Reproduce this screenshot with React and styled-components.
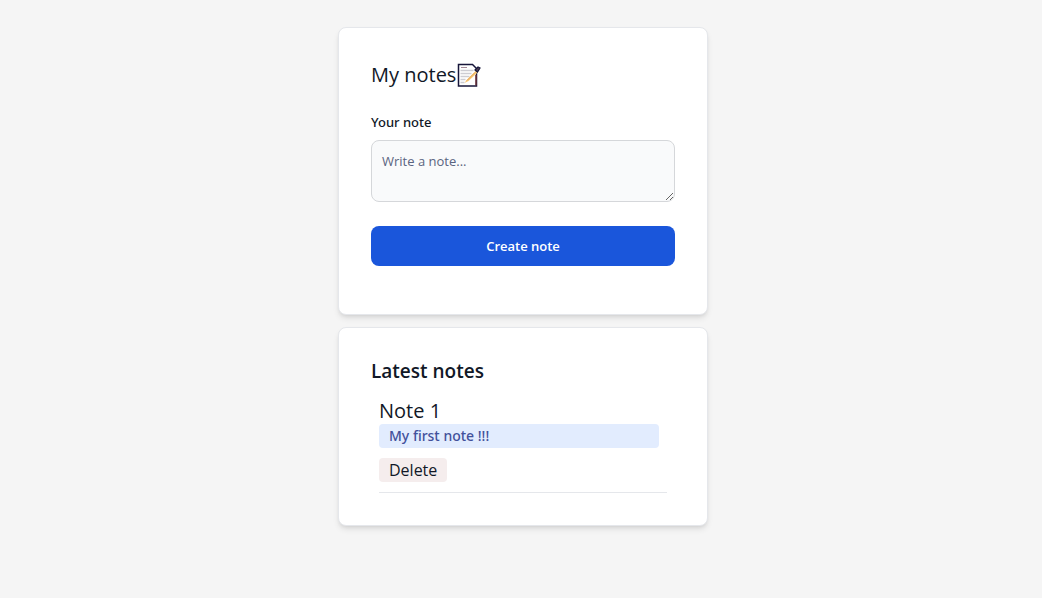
import React from "react";
import styled, { createGlobalStyle } from "styled-components";

const GlobalStyle = createGlobalStyle`
  *, *::before, *::after { box-sizing: border-box; }
  body {
    margin: 0;
    background: #f5f5f5;
    color: #111827;
    font-family: "Segoe UI", "Open Sans", "Noto Sans", sans-serif;
  }
`;

const Page = styled.main`
  display: flex;
  flex-direction: column;
  align-items: center;
  gap: 12px;
  padding: 27px 0 27px 4px;
`;

const Card = styled.section`
  width: 100%;
  max-width: 370px;
  padding: 32px;
  background: #fff;
  border: 1px solid #e5e7eb;
  border-radius: 8px;
  box-shadow: 0 4px 6px -1px rgba(0, 0, 0, 0.1), 0 2px 4px -2px rgba(0, 0, 0, 0.1);
`;

const Title = styled.h1`
  display: flex;
  align-items: center;
  margin: 0 0 22px;
  font-size: 20px;
  line-height: 30px;
  font-weight: 400;
`;

const MemoSvg = styled.svg`
  flex: none;
  width: 26px;
  height: 26px;
`;

const Form = styled.form`
  display: flex;
  flex-direction: column;
  margin: 0 0 16px;
`;

const Label = styled.label`
  margin-bottom: 8px;
  font-family: "Segoe UI", "Noto Sans", sans-serif;
  font-size: 13px;
  line-height: 20px;
  font-weight: 500;
`;

const NoteInput = styled.textarea`
  display: block;
  width: 100%;
  height: 62px;
  margin-bottom: 24px;
  padding: 10px;
  resize: vertical;
  font: inherit;
  font-size: 13px;
  line-height: 20px;
  color: #111827;
  background: #f9fafb;
  border: 1px solid #d5d7da;
  border-radius: 8px;

  &::placeholder { color: #5a6480; opacity: 1; }
`;

const SubmitButton = styled.button`
  padding: 10px 20px;
  font: inherit;
  font-size: 13px;
  line-height: 20px;
  font-weight: 600;
  color: #fff;
  background: #1a56db;
  border: 0;
  border-radius: 8px;
  cursor: pointer;
`;

const ListTitle = styled.h2`
  margin: 0 0 16px;
  font-size: 19px;
  line-height: 22px;
  font-weight: 600;
`;

const NoteList = styled.ul`
  margin: 0;
  padding: 0 8px;
  list-style: none;
`;

const NoteItem = styled.li`
  display: flex;
  flex-direction: column;
  align-items: flex-start;
  padding-bottom: 10px;
  border-bottom: 1px solid #e5e7eb;
`;

const NoteTitle = styled.h3`
  margin: 0;
  font-size: 20px;
  line-height: 26px;
  font-weight: 400;
`;

const NoteText = styled.p`
  align-self: stretch;
  margin: 0 8px 10px 0;
  padding: 2px 10px;
  font-family: "Segoe UI", "Noto Sans", sans-serif;
  font-size: 14px;
  line-height: 20px;
  font-weight: 500;
  color: #42519b;
  background: #e2ecfe;
  border-radius: 4px;
`;

const DeleteButton = styled.button`
  padding: 0 10px;
  font: inherit;
  font-size: 16px;
  line-height: 24px;
  color: #111827;
  background: #f5eded;
  border: 0;
  border-radius: 4px;
  cursor: pointer;
`;

function MemoIcon() {
  return (
    <MemoSvg viewBox="0 0 26 26" aria-hidden="true">
      <path d="M2.500 2.500h14l4 4v17.500h-18z" fill="#fff" stroke="#17163a" strokeWidth="1.500" />
      <path d="M20 13v10.500" stroke="#6b3038" strokeWidth="1.500" />
      <path d="M5 5.500h6" stroke="#a58b98" strokeWidth="1" />
      <path d="M4.500 8.500h13M4.500 11.500h11M4.500 14.500h9M4.500 17.500h5M4.500 20.500h4" stroke="#cdcdd3" strokeWidth="1.300" />
      <path d="M8.500 21l2-3 9-9 2 1.500-9 8.500z" fill="#f8c878" />
      <path d="M11 18.500l8-8" stroke="#d88d42" strokeWidth="0.600" />
      <path d="M19 8l3-3 2 1-2.500 4z" fill="#514254" stroke="#17163a" strokeWidth="1.200" />
    </MemoSvg>
  );
}

const notes = [{ id: 1, title: "Note 1", text: "My first note !!!" }];

export default function App() {
  return (
    <>
      <GlobalStyle />
      <Page>
        <Card>
          <Title>My notes<MemoIcon /></Title>
          <Form onSubmit={(event) => event.preventDefault()}>
            <Label htmlFor="note">Your note</Label>
            <NoteInput id="note" placeholder="Write a note..." />
            <SubmitButton type="submit">Create note</SubmitButton>
          </Form>
        </Card>
        <Card>
          <ListTitle>Latest notes</ListTitle>
          <NoteList>
            {notes.map((note) => (
              <NoteItem key={note.id}>
                <NoteTitle>{note.title}</NoteTitle>
                <NoteText>{note.text}</NoteText>
                <DeleteButton type="button">Delete</DeleteButton>
              </NoteItem>
            ))}
          </NoteList>
        </Card>
      </Page>
    </>
  );
}
